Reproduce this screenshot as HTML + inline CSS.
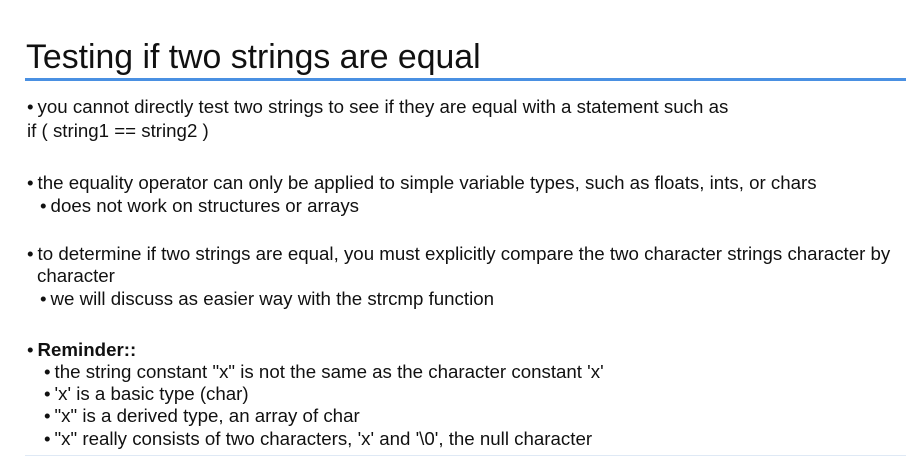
<!DOCTYPE html>
<html><head><style>
body{margin:0;width:906px;height:459px;background:#fff;position:relative;overflow:hidden;font-family:"Liberation Sans",Arial,sans-serif;color:#111}
.t{position:absolute;left:26px;top:38px;font-size:33.8px;white-space:nowrap}
.bl{position:absolute;left:25px;top:78px;width:881px;height:3px;background:#4a90e2}
.bb{position:absolute;left:25px;top:455px;width:881px;height:1px;background:#dfe9f5}
.l{position:absolute;font-size:18.7px;white-space:nowrap;line-height:20px}
.l b{font-weight:normal;margin-right:4px}
</style></head><body>
<div class="t">Testing if two strings are equal</div>
<div class="bl"></div>
<div class="l" style="left:27px;top:97px"><b>•</b>you cannot directly test two strings to see if they are equal with a statement such as</div>
<div class="l" style="left:27px;top:121px">if ( string1 == string2 )</div>
<div class="l" style="left:27px;top:173px"><b>•</b>the equality operator can only be applied to simple variable types, such as floats, ints, or chars</div>
<div class="l" style="left:40px;top:196px"><b>•</b>does not work on structures or arrays</div>
<div class="l" style="left:27px;top:244px"><b>•</b>to determine if two strings are equal, you must explicitly compare the two character strings character by</div>
<div class="l" style="left:37px;top:266px">character</div>
<div class="l" style="left:40px;top:289px"><b>•</b>we will discuss as easier way with the strcmp function</div>
<div class="l" style="left:27px;top:340px;font-weight:bold"><b>•</b>Reminder::</div>
<div class="l" style="left:44px;top:362px"><b>•</b>the string constant "x" is not the same as the character constant 'x'</div>
<div class="l" style="left:44px;top:384px"><b>•</b>'x' is a basic type (char)</div>
<div class="l" style="left:44px;top:406px"><b>•</b>"x" is a derived type, an array of char</div>
<div class="l" style="left:44px;top:429px"><b>•</b>"x" really consists of two characters, 'x' and '\0', the null character</div>
<div class="bb"></div>
</body></html>
